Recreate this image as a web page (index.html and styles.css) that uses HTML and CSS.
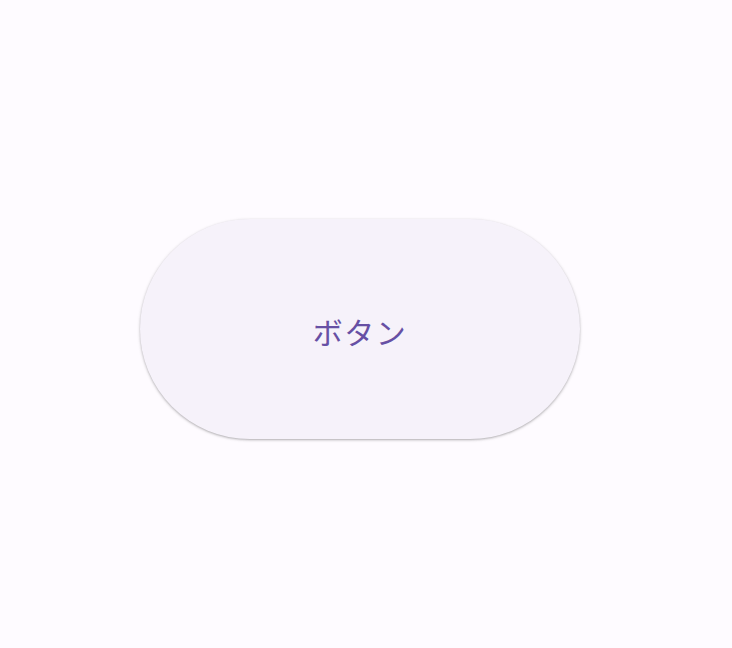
FILE: index.html
```html
<!DOCTYPE html>
<html lang="ja">
<head>
<meta charset="utf-8">
<link rel="stylesheet" href="styles.css">
</head>
<body>
<main class="stage">
  <button class="pill">ボタン</button>
</main>
</body>
</html>
```
FILE: styles.css
```css
html, body {
  margin: 0;
  padding: 0;
  background: #fefbff;
}
.stage {
  width: 732px;
  height: 648px;
  display: flex;
  align-items: flex-start;
  justify-content: flex-start;
  padding: 219px 0 0 140px;
  box-sizing: border-box;
}
.pill {
  width: 440px;
  height: 220px;
  border: none;
  border-radius: 110px;
  background: #f6f2fa;
  color: #6750a4;
  font-family: "Noto Sans CJK JP", "Noto Sans", sans-serif;
  font-size: 30px;
  font-weight: 400;
  letter-spacing: 1.5px;
  padding: 4px 0 0 0;
  box-shadow: 0 1px 2px rgba(0,0,0,0.22), 0 1px 3px 1px rgba(0,0,0,0.08);
  cursor: pointer;
}
```
